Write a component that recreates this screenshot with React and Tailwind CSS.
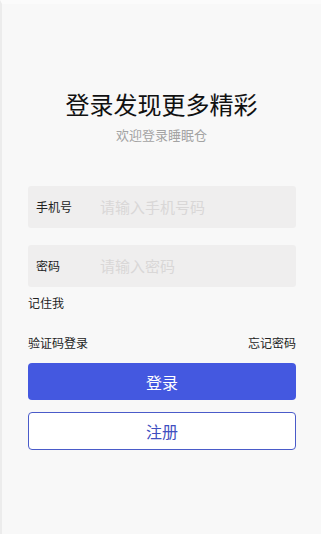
import React, { useState } from "react";

const Field = ({ label, placeholder, type = "text" }) => {
  const [value, setValue] = useState("");
  return (
    <div className="flex items-center h-[42px] rounded-[3px] bg-[#efeeee] pl-2">
      <span className="w-[64px] shrink-0 text-[12px] text-[#222]">{label}</span>
      <input
        type={type}
        value={value}
        onChange={(e) => setValue(e.target.value)}
        placeholder={placeholder}
        className="flex-1 min-w-0 bg-transparent outline-none text-[15px] text-[#333] placeholder:text-[#d9d7d7]"
      />
    </div>
  );
};

const App = () => {
  return (
    <div
      className="min-h-[534px] w-full bg-[#f8f8f8] border-l-2 border-l-[#ececec] border-t-4 border-t-[#fbfbfb] flex flex-col"
      style={{ fontFamily: '"Noto Sans CJK SC", "Liberation Sans", sans-serif' }}
    >
      <div className="pt-[84px] flex flex-col items-center">
        <h1 className="text-[24px] leading-[32px] text-[#111]">登录发现更多精彩</h1>
        <p className="mt-[6px] text-[13px] leading-[18px] text-[#a3a3a3]">欢迎登录睡眠仓</p>
      </div>

      <div className="mt-[42px] pl-[26px] pr-[25px] flex flex-col">
        <Field label="手机号" placeholder="请输入手机号码" />
        <div className="mt-[17px]">
          <Field label="密码" placeholder="请输入密码" type="password" />
        </div>
        <div className="mt-[7px] text-[12px] leading-[18px] text-[#222]">记住我</div>

        <div className="mt-[23px] flex justify-between text-[12px] leading-[16px] text-[#222]">
          <span>验证码登录</span>
          <span>忘记密码</span>
        </div>

        <button className="mt-[12px] h-[37px] rounded-[4px] bg-[#4458e0] text-white text-[16px]">
          登录
        </button>
        <button className="mt-[12px] h-[38px] rounded-[4px] bg-white border border-[#4a5bc9] text-[#3f4fc0] text-[16px]">
          注册
        </button>
      </div>
    </div>
  );
};

export default App;
